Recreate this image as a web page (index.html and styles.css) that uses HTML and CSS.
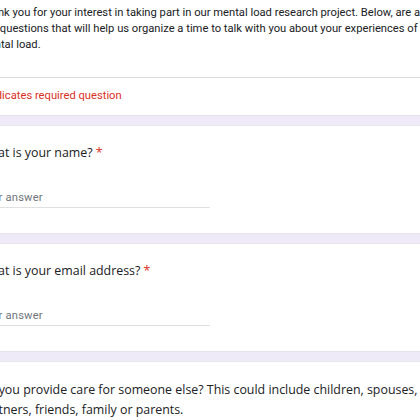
FILE: index.html
```html
<!DOCTYPE html>
<html>
<head>
<meta charset="utf-8">
<link rel="stylesheet" href="styles.css">
</head>
<body>
<div class="page">
  <section class="card intro">
    <p class="desc">Thank you for your interest in taking part in our mental load research project. Below, are a few<br>few questions that will help us organize a time to talk with you about your experiences of the<br>mental load.</p>
    <div class="divider"></div>
    <p class="required">* Indicates required question</p>
  </section>
  <div class="band"></div>
  <section class="card question">
    <h2 class="qtitle">What is your name? <span class="star">*</span></h2>
    <div class="answer"><span class="placeholder">Your answer</span></div>
  </section>
  <div class="band"></div>
  <section class="card question">
    <h2 class="qtitle">What is your email address? <span class="star">*</span></h2>
    <div class="answer"><span class="placeholder">Your answer</span></div>
  </section>
  <div class="band"></div>
  <section class="card question last">
    <h2 class="qtitle multi">Do you provide care for someone else? This could include children, spouses,<br>partners, friends, family or parents.</h2>
  </section>
</div>
</body>
</html>
```

FILE: styles.css
```css
html, body {
  margin: 0;
  padding: 0;
  overflow: hidden;
  background: #ffffff;
}

.page {
  width: 760px;
  margin-left: -21px;
  display: flex;
  flex-direction: column;
}

.card {
  background: #ffffff;
}

.intro {
  padding-top: 5px;
  padding-bottom: 11px;
}

.desc {
  margin: 0;
  font-family: Roboto, "Liberation Sans", sans-serif;
  font-size: 11.2px;
  line-height: 16px;
  color: #202124;
  white-space: nowrap;
}

.divider {
  height: 1px;
  background: #dadce0;
  margin: 24px 0 0 -40px;
}

.required {
  margin: 10px 0 0 0;
  font-family: Roboto, "Liberation Sans", sans-serif;
  font-size: 11.2px;
  line-height: 16px;
  color: #d93025;
}

.band {
  height: 11px;
  background: #efeaf8;
  border-top: 1px solid #e6e2ee;
  border-bottom: 1px solid #e9e6ef;
  box-sizing: border-box;
}

.question {
  padding-top: 17px;
  padding-bottom: 25px;
}

.question.last {
  padding-top: 18px;
  padding-bottom: 20px;
}

.qtitle {
  margin: 0;
  font-family: "Open Sans", "Liberation Sans", sans-serif;
  font-weight: 400;
  font-size: 12.4px;
  line-height: 20px;
  color: #202124;
  white-space: nowrap;
}

.star {
  color: #d93025;
}

.answer {
  width: 231px;
  margin-top: 27px;
  border-bottom: 1px solid #e0e0e0;
  padding-bottom: 1px;
  font-family: Roboto, "Liberation Sans", sans-serif;
  font-size: 11.2px;
  line-height: 16px;
}

.placeholder {
  color: #70757a;
  letter-spacing: 0.2px;
}
```
